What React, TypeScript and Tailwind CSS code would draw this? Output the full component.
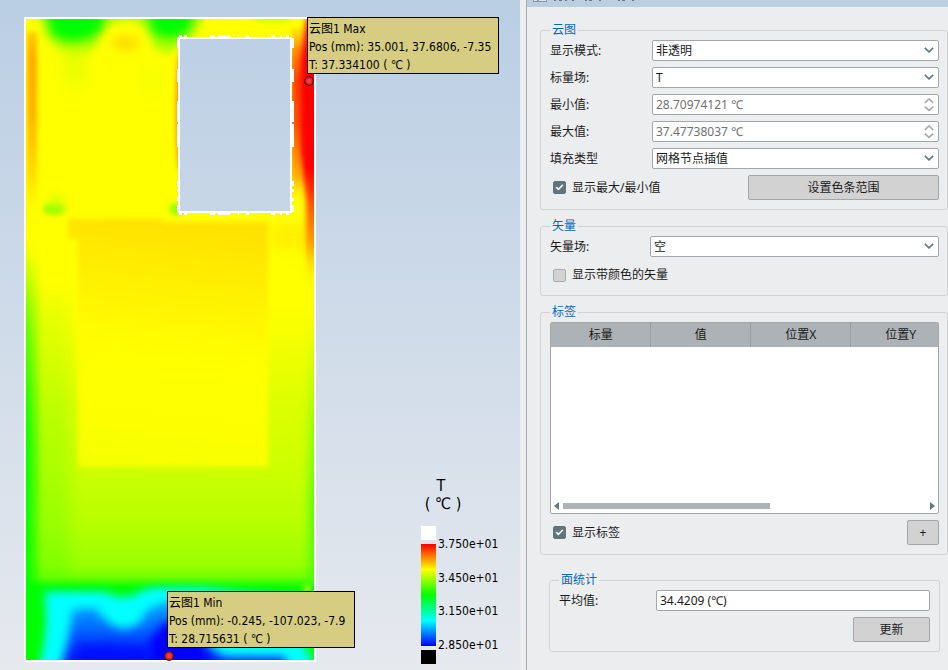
import * as React from "react";
import { Check } from "lucide-react";

const fieldBox =
  "h-[21px] w-full min-w-0 rounded-[2px] border border-[#a3a7aa] bg-white px-[3px] leading-[19px]";

// notches of the cut-out edge: [start, length]
const notchX = [
  [179, 3], [184, 3], [210, 5], [218, 12], [238, 1], [246, 3], [271, 4], [280, 2], [286, 3],
];
const notchY = [
  [38, 10], [69, 13], [101, 21], [124, 23], [181, 5], [189, 3], [198, 3], [205, 7],
];

const ticks = ["3.750e+01", "3.450e+01", "3.150e+01", "2.850e+01"];

function Heatmap() {
  return (
    <svg
      viewBox="24 17 292 645"
      className="absolute left-[24px] top-[17px] h-[645px] w-[292px]"
      role="img"
      aria-label="云图1"
    >
      <defs>
        <clipPath id="plate">
          <path clipRule="evenodd" d="M25 18H315V661H25Z M180 39V211H290V39Z" />
        </clipPath>
        <linearGradient id="base" gradientUnits="userSpaceOnUse" x1="0" y1="18" x2="0" y2="661">
          <stop offset="0" stopColor="#ffff00" />
          <stop offset="0.44" stopColor="#ffff00" />
          <stop offset="0.52" stopColor="#f0ff00" />
          <stop offset="0.6" stopColor="#dcff00" />
          <stop offset="0.7" stopColor="#cdff00" />
          <stop offset="0.78" stopColor="#b9ff00" />
          <stop offset="0.85" stopColor="#9bff00" />
          <stop offset="0.868" stopColor="#78ff00" />
          <stop offset="0.886" stopColor="#00ff00" />
          <stop offset="1" stopColor="#00ff00" />
        </linearGradient>
        <linearGradient id="core" gradientUnits="userSpaceOnUse" x1="150" y1="215" x2="120" y2="470">
          <stop offset="0" stopColor="#ffe100" />
          <stop offset="0.15" stopColor="#ffe900" />
          <stop offset="0.35" stopColor="#fff500" />
          <stop offset="0.55" stopColor="#ffff00" />
          <stop offset="0.8" stopColor="#fdff00" />
          <stop offset="1" stopColor="#f4ff00" />
        </linearGradient>
        <linearGradient id="coolEdge" gradientUnits="userSpaceOnUse" x1="0" y1="240" x2="0" y2="450">
          <stop offset="0" stopColor="#00ff00" stopOpacity="0" />
          <stop offset="0.4" stopColor="#00ff00" stopOpacity="0.5" />
          <stop offset="1" stopColor="#00ff00" />
        </linearGradient>
        <linearGradient id="coolEdgeRight" gradientUnits="userSpaceOnUse" x1="0" y1="320" x2="0" y2="500">
          <stop offset="0" stopColor="#40ff00" stopOpacity="0" />
          <stop offset="1" stopColor="#30ff00" stopOpacity="0.8" />
        </linearGradient>
        <linearGradient id="hotEdge" gradientUnits="userSpaceOnUse" x1="0" y1="18" x2="0" y2="290">
          <stop offset="0" stopColor="#ff3000" />
          <stop offset="0.15" stopColor="#ff0000" />
          <stop offset="0.55" stopColor="#ff0000" />
          <stop offset="0.7" stopColor="#ff6000" />
          <stop offset="0.83" stopColor="#ffa000" />
          <stop offset="1" stopColor="#ffff00" stopOpacity="0" />
        </linearGradient>
        <linearGradient id="warmEdge" gradientUnits="userSpaceOnUse" x1="0" y1="28" x2="0" y2="205">
          <stop offset="0" stopColor="#ffb400" stopOpacity="0.3" />
          <stop offset="0.12" stopColor="#ff8c00" />
          <stop offset="0.3" stopColor="#ff4000" />
          <stop offset="0.55" stopColor="#ff5000" />
          <stop offset="0.85" stopColor="#ffb400" />
          <stop offset="1" stopColor="#ffff00" stopOpacity="0" />
        </linearGradient>
        <linearGradient id="warmLeft" gradientUnits="userSpaceOnUse" x1="0" y1="28" x2="0" y2="225">
          <stop offset="0" stopColor="#ffd200" />
          <stop offset="0.15" stopColor="#ffaa00" />
          <stop offset="0.45" stopColor="#ffb400" />
          <stop offset="0.75" stopColor="#ffdc00" />
          <stop offset="1" stopColor="#ffff00" stopOpacity="0" />
        </linearGradient>
        <linearGradient id="cold" gradientUnits="userSpaceOnUse" x1="0" y1="604" x2="0" y2="661">
          <stop offset="0" stopColor="#00a0ff" />
          <stop offset="0.35" stopColor="#0078ff" />
          <stop offset="0.7" stopColor="#0038ff" />
          <stop offset="1" stopColor="#0020ff" />
        </linearGradient>
        <filter id="soft2" x="-100%" y="-50%" width="300%" height="200%" colorInterpolationFilters="sRGB">
          <feGaussianBlur stdDeviation="2.5" />
        </filter>
        <filter id="soft4" x="-150%" y="-60%" width="400%" height="220%" colorInterpolationFilters="sRGB">
          <feGaussianBlur stdDeviation="5" />
        </filter>
        <filter id="soft8" x="-150%" y="-100%" width="400%" height="300%" colorInterpolationFilters="sRGB">
          <feGaussianBlur stdDeviation="8" />
        </filter>
      </defs>

      <g clipPath="url(#plate)">
        <rect x="25" y="18" width="290" height="643" fill="url(#base)" />
        <rect x="5" y="240" width="27" height="440" fill="url(#coolEdge)" filter="url(#soft4)" />
        <rect x="15" y="260" width="25" height="420" fill="url(#coolEdge)" opacity="0.3" filter="url(#soft2)" />
        <rect x="10" y="290" width="60" height="290" fill="url(#coolEdge)" opacity="0.16" filter="url(#soft8)" />
        <rect x="310" y="320" width="20" height="262" fill="url(#coolEdgeRight)" filter="url(#soft4)" />

        <path d="M68 219H163V222H268V467H78V239H68Z" fill="url(#core)" filter="url(#soft2)" />
        <rect x="272" y="226" width="50" height="22" fill="#ffe400" opacity="0.7" filter="url(#soft8)" />

        <path
          d="M34 0H208L200 22Q190 48 166 52Q150 50 144 26Q126 12 106 28Q98 50 76 56Q50 48 44 28Z"
          fill="#a0ff00"
          filter="url(#soft4)"
        />
        <ellipse cx="74" cy="66" rx="12" ry="22" fill="#e0ff00" opacity="0.8" filter="url(#soft8)" />
        <ellipse cx="150" cy="80" rx="12" ry="16" fill="#f8ff00" opacity="0.8" filter="url(#soft4)" />
        <path d="M40 -10H110L101 30Q76 50 52 34Z" fill="#00ff00" filter="url(#soft4)" />
        <path d="M140 -10H202L189 30Q170 44 153 32Z" fill="#00ff00" filter="url(#soft4)" />
        <ellipse cx="126" cy="44" rx="23" ry="15" fill="#ffff00" filter="url(#soft4)" />
        <ellipse cx="126" cy="43" rx="14" ry="8" fill="#ffe000" filter="url(#soft4)" />
        <ellipse cx="272" cy="18" rx="20" ry="4" fill="#c8ff00" filter="url(#soft2)" />

        <rect x="27" y="32" width="10" height="195" fill="url(#warmLeft)" filter="url(#soft2)" />
        <ellipse cx="180" cy="112" rx="4" ry="60" fill="#ff8c00" filter="url(#soft2)" />
        <rect x="291" y="28" width="32" height="180" fill="url(#warmEdge)" filter="url(#soft2)" />
        <path d="M306 18H325V290H306V200L301 150V60Z" fill="url(#hotEdge)" filter="url(#soft2)" />

        <ellipse cx="54" cy="209" rx="11" ry="6" fill="#96ff00" filter="url(#soft2)" />
        <ellipse cx="56" cy="202" rx="7" ry="9" fill="#c8ff00" opacity="0.7" filter="url(#soft4)" />
        <ellipse cx="177" cy="209" rx="8" ry="6" fill="#96ff00" filter="url(#soft2)" />

        <path
          d="M38 680L45 640Q49 614 44 592H106Q122 602 142 591L150 588H200L290 598L300 640L310 656L318 680Z"
          fill="#00ffff"
          filter="url(#soft4)"
        />
        <path
          d="M44 680L50 640L52 598H98Q112 616 136 608L152 594H220L280 610L296 654L304 680Z"
          fill="#00ffff"
          filter="url(#soft4)"
        />
        <path
          d="M54 690L68 642L73 609H97Q107 627 124 629Q142 627 146 611L166 602H190L206 644L224 657H284L296 690Z"
          fill="url(#cold)"
          filter="url(#soft4)"
        />
        <path d="M150 690L150 640L164 622H190L204 650L220 690Z" fill="#0000ff" filter="url(#soft4)" />
        <path d="M68 690L80 645H100L150 648V690Z" fill="#0010ff" filter="url(#soft4)" />
        <ellipse cx="307" cy="589" rx="4" ry="5" fill="#a0ff00" filter="url(#soft2)" />
      </g>

      <g fill="#fff" shapeRendering="crispEdges">
        {notchX.map(([x, w]) => (
          <React.Fragment key={x}>
            <rect x={x} y="35" width={w} height="3" />
            <rect x={x} y="212" width={w} height="3" />
          </React.Fragment>
        ))}
        {notchY.map(([y, h]) => (
          <React.Fragment key={y}>
            <rect x="177" y={y} width="2" height={h} />
            <rect x="291" y={y} width="3" height={h} />
          </React.Fragment>
        ))}
        <rect x="179" y="38" width="112" height="174" fill="none" stroke="#fff" strokeWidth="2" />
        <rect x="25" y="18" width="290" height="643" fill="none" stroke="#fff" strokeWidth="2" />
      </g>
    </svg>
  );
}

function Probe({ className }: { className: string }) {
  return (
    <svg viewBox="0 0 10 10" className={"absolute size-[10px] " + className} aria-hidden>
      <circle cx="5" cy="5" r="4.3" fill="#e02828" stroke="#5a1010" strokeWidth="1.2" />
      <circle cx="5" cy="5" r="2" fill="#ff3c3c" />
    </svg>
  );
}

function Callout({ lines, className }: { lines: string[]; className: string }) {
  return (
    <div
      className={
        "absolute h-[57px] overflow-hidden whitespace-nowrap border border-black bg-[#d6cd82] pl-px pt-0.5 leading-[18px] text-black " +
        className
      }
    >
      {lines.map((l) => (
        <div key={l}>{l}</div>
      ))}
    </div>
  );
}

function Legend() {
  return (
    <div className="absolute left-[421px] top-[477px] text-black">
      <div className="w-11 text-center text-base leading-[18px]">
        <div className="pr-1">T</div>
        <div className="whitespace-nowrap">( ℃ )</div>
      </div>
      <div className="mt-[13px] flex gap-0.5">
        <div className="w-[15px]">
          <div className="h-[14px] bg-white" />
          <div className="my-1 h-[102px] bg-[linear-gradient(#ff0000,#ffff00_25%,#00ff00_50%,#00ffff_75%,#0000ff)]" />
          <div className="h-[14px] bg-black" />
        </div>
        <div className="flex h-32 flex-col justify-between pt-[9px]">
          {ticks.map((t) => (
            <div key={t} className="leading-[18px]">{t}</div>
          ))}
        </div>
      </div>
    </div>
  );
}

function Group({
  title,
  className,
  children,
}: {
  title: string;
  className: string;
  children: React.ReactNode;
}) {
  return (
    <fieldset className={"min-w-0 rounded-[3px] border border-[#d0d2d4] px-[9px] " + className}>
      <legend className="px-0.5 leading-4 text-[#0a66c2]">{title}</legend>
      {children}
    </fieldset>
  );
}

function Select({ id, value }: { id: string; value: string }) {
  return (
    <div className="relative">
      <select id={id} defaultValue={value} className={fieldBox + " block appearance-none"}>
        <option>{value}</option>
      </select>
      <svg
        viewBox="0 0 10 6"
        className="pointer-events-none absolute right-[5px] top-[7px] h-1.5 w-2.5 fill-none stroke-[#607880] stroke-[1.6]"
        aria-hidden
      >
        <path d="M0.8 0.8L5 4.8L9.2 0.8" />
      </svg>
    </div>
  );
}

function Spin({ id, value }: { id: string; value: string }) {
  return (
    <div className="relative">
      <input id={id} defaultValue={value} className={fieldBox + " block text-[#707070]"} />
      <svg
        viewBox="0 0 10 14"
        className="pointer-events-none absolute right-[5px] top-1 h-3.5 w-2.5 fill-none stroke-[#a8a8a8] stroke-[1.6]"
        aria-hidden
      >
        <path d="M0.8 4.8L5 1L9.2 4.8M0.8 8.6L5 12.4L9.2 8.6" />
      </svg>
    </div>
  );
}

function Tick({ id, label, checked }: { id: string; label: string; checked?: boolean }) {
  return (
    <label htmlFor={id} className="flex items-center gap-1.5 pl-[3px] leading-4">
      <span className="relative size-[13px]">
        <input
          id={id}
          type="checkbox"
          defaultChecked={checked}
          className="peer block size-[13px] appearance-none rounded-[2px] border border-[#a9abad] bg-[#d2d2d2] checked:border-[#5f747b] checked:bg-[#5f747b]"
        />
        <Check
          className="pointer-events-none absolute left-0.5 top-0.5 hidden size-[9px] text-white peer-checked:block"
          strokeWidth={4}
        />
      </span>
      {label}
    </label>
  );
}

function Button({ className, children }: { className: string; children: React.ReactNode }) {
  return (
    <button
      type="button"
      className={"h-[25px] rounded-[2px] border border-[#a3a5a7] bg-[#d2d2d2] leading-4 " + className}
    >
      {children}
    </button>
  );
}

const row = "grid grid-cols-[102px_1fr] items-center";

export default function App() {
  return (
    <main className="grid min-h-screen grid-cols-[1fr_428px] bg-[#ecedef] font-['Noto_Sans','Noto_Sans_CJK_SC',sans-serif] text-xs text-[#1a1a1a]">
      <section className="relative min-h-[662px] overflow-hidden bg-linear-to-b from-[#bacee4] to-[#e6e9ee] font-['DejaVu_Sans_Condensed','Noto_Sans_CJK_SC',sans-serif]">
        <Heatmap />
        <Callout
          className="left-[307px] top-[17px] w-[192px]"
          lines={["云图1 Max", "Pos (mm): 35.001, 37.6806, -7.35", "T: 37.334100 ( ℃ )"]}
        />
        <Callout
          className="left-[167px] top-[591px] w-[188px]"
          lines={["云图1 Min", "Pos (mm): -0.245, -107.023, -7.9", "T: 28.715631 ( ℃ )"]}
        />
        <Probe className="left-[304px] top-[76px]" />
        <Probe className="left-[164px] top-[651px]" />
        <Legend />
      </section>

      <aside className="ml-1.5 min-w-0 overflow-hidden border-l border-[#a6abb0]">
        <header className="h-[7px] bg-[#bccfe1] pl-1.5">
          <svg viewBox="0 0 104 2" className="h-0.5 w-[104px]" shapeRendering="crispEdges" aria-hidden>
            <path d="M0 0H14V2H0Z" fill="#8494ad" />
            <path d="M1 0H4V1H1ZM6 0H13V1H6Z" fill="#dfe5ec" />
            <path
              d="M21 0.5h2M26 0.5h3M32 0.5h2M39 0.5h2M52 0.5h2M56 0.5h3M66 0.5h2M85 0.5h2M89 0.5h3M99 0.5h2"
              stroke="#66788f"
            />
          </svg>
        </header>

        <form className="pl-[13px] pt-[15px]">
          <Group title="云图" className="pb-[9px] pr-2 pt-0.5">
            <div className="flex flex-col gap-1.5">
              <div className={row}>
                <label htmlFor="mode">显示模式:</label>
                <Select id="mode" value="非透明" />
              </div>
              <div className={row}>
                <label htmlFor="scalar">标量场:</label>
                <Select id="scalar" value="T" />
              </div>
              <div className={row}>
                <label htmlFor="min">最小值:</label>
                <Spin id="min" value="28.70974121 ℃" />
              </div>
              <div className={row}>
                <label htmlFor="max">最大值:</label>
                <Spin id="max" value="37.47738037 ℃" />
              </div>
              <div className={row}>
                <label htmlFor="fill">填充类型</label>
                <Select id="fill" value="网格节点插值" />
              </div>
              <div className="flex items-center justify-between">
                <Tick id="extremes" label="显示最大/最小值" checked />
                <Button className="w-[191px]">设置色条范围</Button>
              </div>
            </div>
          </Group>

          <Group title="矢量" className="mt-2 pb-3 pr-2 pt-0.5">
            <div className="grid grid-cols-[100px_1fr] items-center">
              <label htmlFor="vector">矢量场:</label>
              <Select id="vector" value="空" />
            </div>
            <div className="mt-2.5">
              <Tick id="colored" label="显示带颜色的矢量" />
            </div>
          </Group>

          <Group title="标签" className="mt-2 pb-[9px] pr-2 pt-0.5">
            <div className="flex h-48 flex-col justify-between overflow-hidden rounded-[2px] border border-[#a3a7aa] bg-white">
              <table className="w-[400px] table-fixed border-collapse">
                <thead>
                  <tr className="h-6 bg-[#adb2b6]">
                    {["标量", "值", "位置X", "位置Y"].map((h) => (
                      <th key={h} className="border-r border-[#989da1] p-0 font-normal leading-4">
                        {h}
                      </th>
                    ))}
                  </tr>
                </thead>
                <tbody />
              </table>
              <div className="flex h-[15px] items-center gap-1 px-[3px]">
                <svg viewBox="0 0 5 8" className="h-2 w-[5px]" aria-hidden>
                  <path d="M5 0V8L0 4Z" fill="#607880" />
                </svg>
                <div className="h-1.5 flex-1">
                  <div className="h-full w-[57%] bg-[#adb2b6]" />
                </div>
                <svg viewBox="0 0 5 8" className="h-2 w-[5px]" aria-hidden>
                  <path d="M0 0V8L5 4Z" fill="#607880" />
                </svg>
              </div>
            </div>
            <div className="mt-1.5 flex items-center justify-between">
              <Tick id="labels" label="显示标签" checked />
              <Button className="w-8">+</Button>
            </div>
          </Group>

          <Group title="面统计" className="ml-[9px] mr-2 mt-[17px] pb-[9px] pt-0.5">
            <div className="grid grid-cols-[97px_1fr] items-center">
              <label htmlFor="mean">平均值:</label>
              <input id="mean" defaultValue="34.4209 (℃)" className={fieldBox} />
            </div>
            <div className="mt-1.5 flex justify-end">
              <Button className="w-[77px]">更新</Button>
            </div>
          </Group>
        </form>
      </aside>
    </main>
  );
}
